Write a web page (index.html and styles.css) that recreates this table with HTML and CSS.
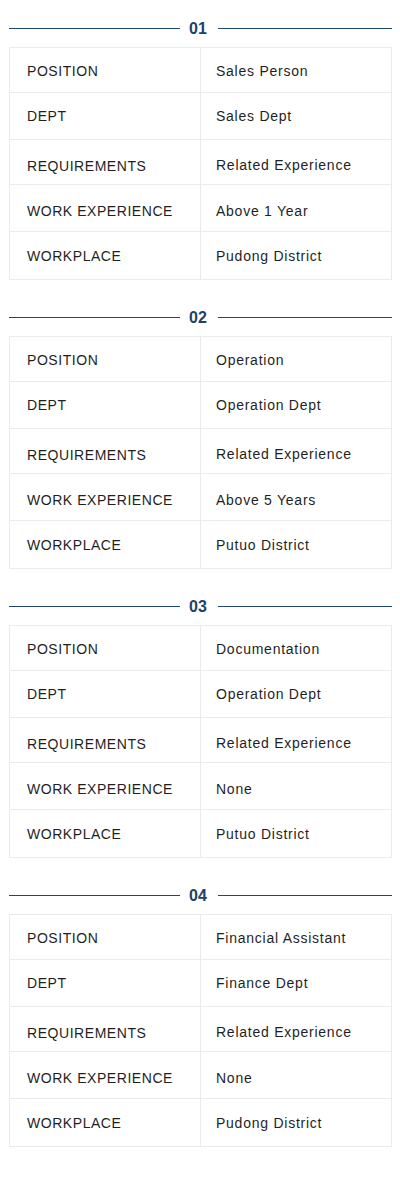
FILE: index.html
```html
<!DOCTYPE html>
<html lang="en">
<head>
<meta charset="utf-8">
<title>Jobs</title>
<link rel="stylesheet" href="styles.css">
</head>
<body>
<main class="jobs">
  <section class="job">
    <div class="job-head"><span class="rule"></span><span class="num">01</span><span class="rule"></span></div>
    <div class="job-table">
      <div class="row"><div class="label">POSITION</div><div class="value">Sales Person</div></div>
      <div class="row"><div class="label">DEPT</div><div class="value">Sales Dept</div></div>
      <div class="row"><div class="label">REQUIREMENTS</div><div class="value">Related Experience</div></div>
      <div class="row"><div class="label">WORK EXPERIENCE</div><div class="value">Above 1 Year</div></div>
      <div class="row"><div class="label">WORKPLACE</div><div class="value">Pudong District</div></div>
    </div>
  </section>
  <section class="job">
    <div class="job-head"><span class="rule"></span><span class="num">02</span><span class="rule"></span></div>
    <div class="job-table">
      <div class="row"><div class="label">POSITION</div><div class="value">Operation</div></div>
      <div class="row"><div class="label">DEPT</div><div class="value">Operation Dept</div></div>
      <div class="row"><div class="label">REQUIREMENTS</div><div class="value">Related Experience</div></div>
      <div class="row"><div class="label">WORK EXPERIENCE</div><div class="value">Above 5 Years</div></div>
      <div class="row"><div class="label">WORKPLACE</div><div class="value">Putuo District</div></div>
    </div>
  </section>
  <section class="job">
    <div class="job-head"><span class="rule"></span><span class="num">03</span><span class="rule"></span></div>
    <div class="job-table">
      <div class="row"><div class="label">POSITION</div><div class="value">Documentation</div></div>
      <div class="row"><div class="label">DEPT</div><div class="value">Operation Dept</div></div>
      <div class="row"><div class="label">REQUIREMENTS</div><div class="value">Related Experience</div></div>
      <div class="row"><div class="label">WORK EXPERIENCE</div><div class="value">None</div></div>
      <div class="row"><div class="label">WORKPLACE</div><div class="value">Putuo District</div></div>
    </div>
  </section>
  <section class="job">
    <div class="job-head"><span class="rule"></span><span class="num">04</span><span class="rule"></span></div>
    <div class="job-table">
      <div class="row"><div class="label">POSITION</div><div class="value">Financial Assistant</div></div>
      <div class="row"><div class="label">DEPT</div><div class="value">Finance Dept</div></div>
      <div class="row"><div class="label">REQUIREMENTS</div><div class="value">Related Experience</div></div>
      <div class="row"><div class="label">WORK EXPERIENCE</div><div class="value">None</div></div>
      <div class="row"><div class="label">WORKPLACE</div><div class="value">Pudong District</div></div>
    </div>
  </section>
</main>
</body>
</html>
```

FILE: styles.css
```css
* { box-sizing: border-box; }

html, body {
  margin: 0;
  padding: 0;
  background: #ffffff;
}

body {
  font-family: "Liberation Sans", Arial, sans-serif;
  color: #1f1f1f;
}

.jobs {
  display: flex;
  flex-direction: column;
  gap: 18px;
  padding: 9px 8px 0 9px;
}

.job-head {
  display: flex;
  align-items: center;
  height: 38px;
}

.rule {
  flex: 171 1 0;
  height: 1px;
  background: #1d4670;
}

.rule:last-child {
  flex-grow: 174;
}

.num {
  margin: 1px 11px 0 9px;
  font-size: 16px;
  font-weight: bold;
  line-height: 20px;
  color: #1b426b;
}

.job-table {
  border: 1px solid #ebebeb;
  border-bottom: 0;
}

.row {
  display: grid;
  grid-template-columns: 190px 1fr;
  border-bottom: 1px solid #ebebeb;
  height: 45px;
  font-size: 14px;
  line-height: 20px;
}

.row:nth-child(2) { height: 47px; }
.row:nth-child(3) { height: 45px; }
.row:nth-child(4) { height: 47px; }
.row:nth-child(5) { height: 48px; }

.label,
.value {
  padding: 13px 0 0 17px;
  white-space: nowrap;
}

.label {
  letter-spacing: 0.55px;
}

.value {
  border-left: 1px solid #ebebeb;
  padding-left: 15px;
  letter-spacing: 0.75px;
}

.row:nth-child(3) .label,
.row:nth-child(4) .label { padding-top: 16px; }
.row:nth-child(3) .value { padding-top: 15px; }
.row:nth-child(4) .value { padding-top: 16px; }
.row:nth-child(5) .label,
.row:nth-child(5) .value { padding-top: 14px; }
```
